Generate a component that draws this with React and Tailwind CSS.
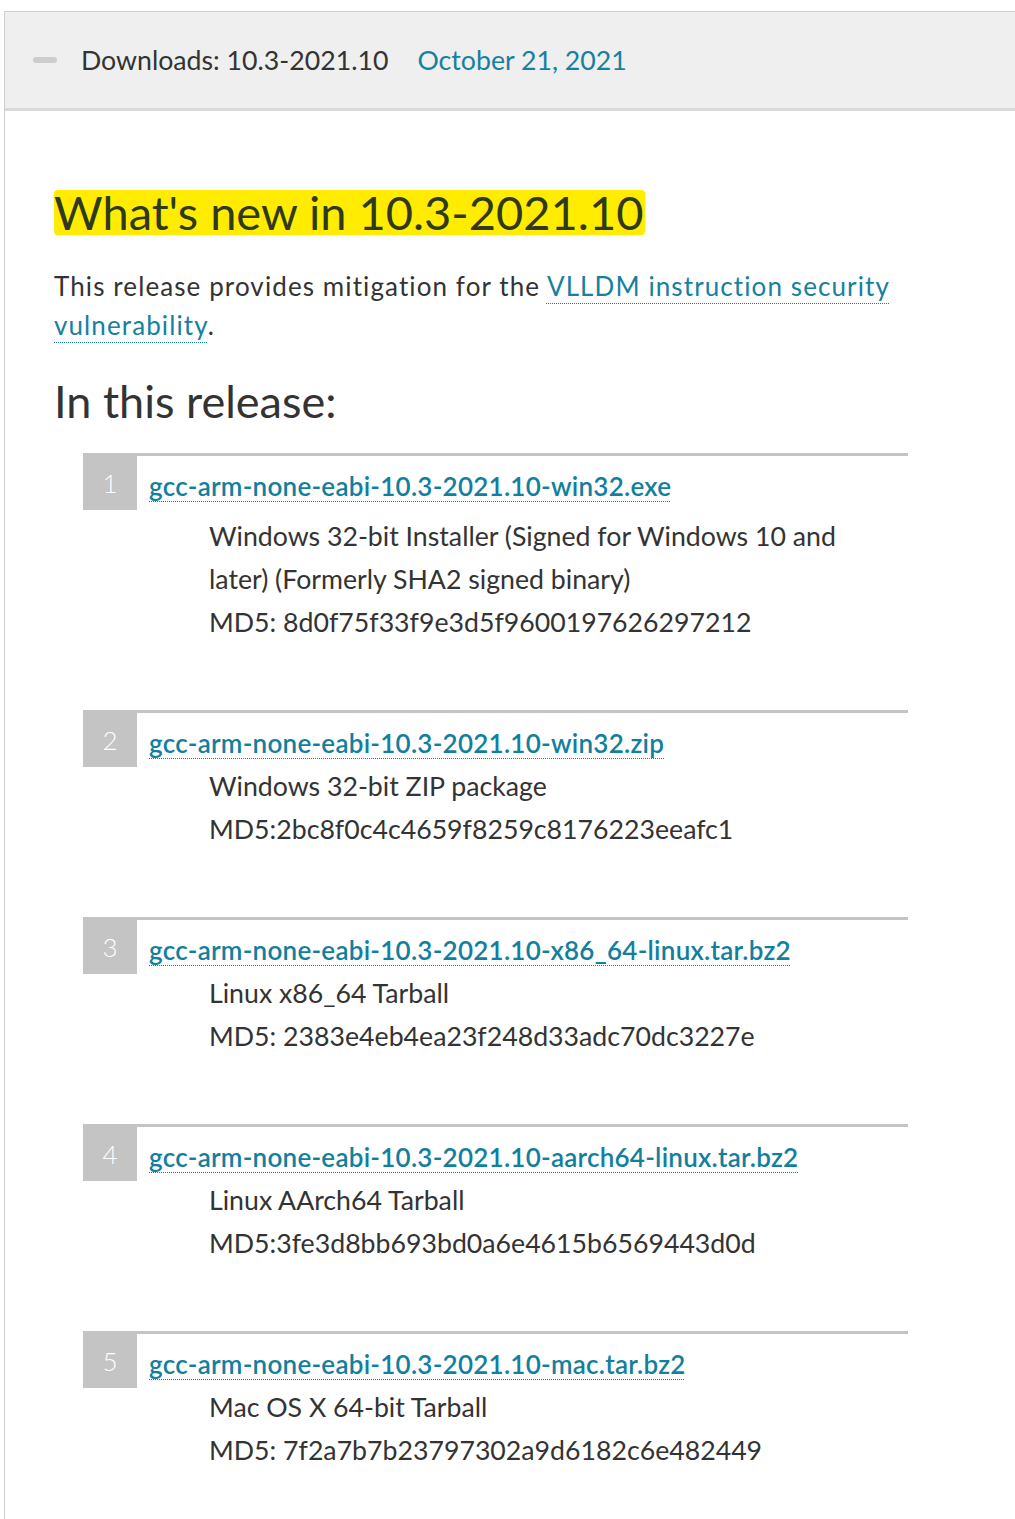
import React from 'react';

const files = [
  {
    n: 1,
    name: 'gcc-arm-none-eabi-10.3-2021.10-win32.exe',
    lines: ['Windows 32-bit Installer (Signed for Windows 10 and', 'later) (Formerly SHA2 signed binary)', 'MD5: 8d0f75f33f9e3d5f9600197626297212'],
    first: true,
  },
  {
    n: 2,
    name: 'gcc-arm-none-eabi-10.3-2021.10-win32.zip',
    lines: ['Windows 32-bit ZIP package', 'MD5:2bc8f0c4c4659f8259c8176223eeafc1'],
  },
  {
    n: 3,
    name: 'gcc-arm-none-eabi-10.3-2021.10-x86_64-linux.tar.bz2',
    lines: ['Linux x86_64 Tarball', 'MD5: 2383e4eb4ea23f248d33adc70dc3227e'],
  },
  {
    n: 4,
    name: 'gcc-arm-none-eabi-10.3-2021.10-aarch64-linux.tar.bz2',
    lines: ['Linux AArch64 Tarball', 'MD5:3fe3d8bb693bd0a6e4615b6569443d0d'],
  },
  {
    n: 5,
    name: 'gcc-arm-none-eabi-10.3-2021.10-mac.tar.bz2',
    lines: ['Mac OS X 64-bit Tarball', 'MD5: 7f2a7b7b23797302a9d6182c6e482449'],
  },
];

function FileItem({ item }) {
  return (
    <li className="w-[825px] border-t-[3px] border-[#c4c4c4] mb-[66px]">
      <div className="flex">
        <div className="w-[54px] h-[54px] shrink-0 bg-[#c4c4c4] text-white text-[26px] font-light flex items-center justify-center">
          {item.n}
        </div>
        <a
          href="#"
          className="ml-[12px] mt-[14px] self-start text-[26px] leading-[32px] font-semibold tracking-[0.25px] text-[#127f9e] underline decoration-dotted decoration-1 underline-offset-[5px]"
        >
          {item.name}
        </a>
      </div>
      <div className={`pl-[126px] ${item.first ? 'mt-[5px]' : '-mt-[2px]'}`}>
        {item.lines.map((l) => (
          <p key={l} className="text-[26.7px] leading-[43px] text-[#333]">
            {l}
          </p>
        ))}
      </div>
    </li>
  );
}

export default function App() {
  return (
    <div className="min-h-screen bg-white pt-[11px] pl-[4px] font-['Lato','Liberation_Sans',sans-serif] text-[#333]">
      <div className="border-l border-[#cfcfcf] min-h-[1508px]">
        {/* Header */}
        <div className="h-[100px] bg-[#efefef] border-t border-[#cfcfcf] border-b-[3px] border-b-[#d9d9d9] flex items-center pl-[28px]">
          <span className="w-[24px] h-[6px] rounded-full bg-[#cdcdcd] mr-[24px]" />
          <span className="text-[26.7px] text-[#333]">Downloads: 10.3-2021.10</span>
          <span className="ml-[29px] text-[26.7px] text-[#16809f]">October 21, 2021</span>
        </div>

        <div className="pl-[49px] pt-[79px]">
          <h2 className="inline-block bg-[#ffec00] text-[47px] leading-[45px] text-[#2f3a1c] pr-[2px] rounded-sm">
            What's new in 10.3-2021.10
          </h2>

          <p className="mt-[31px] w-[880px] text-[26px] leading-[39px] tracking-[1.1px] text-[#333]">
            This release provides mitigation for the{' '}
            <a href="#" className="text-[#16809f] underline decoration-dotted decoration-1 underline-offset-[7px]">
              VLLDM instruction security vulnerability
            </a>
            .
          </p>

          <h3 className="mt-[26px] text-[45px] leading-[60px] text-[#333]">In this release:</h3>

          <ol className="mt-[22px] ml-[29px]">
            {files.map((f) => (
              <FileItem key={f.n} item={f} />
            ))}
          </ol>
        </div>
      </div>
    </div>
  );
}
